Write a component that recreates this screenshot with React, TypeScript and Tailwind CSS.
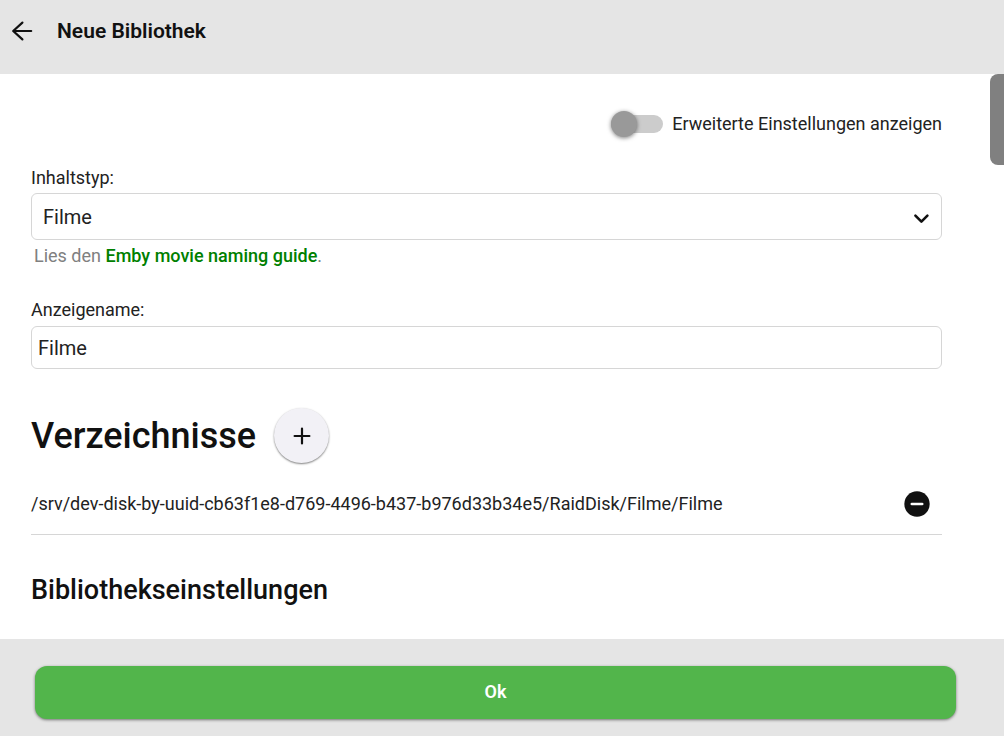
import { useState } from "react";

export default function App() {
  const [advanced, setAdvanced] = useState(false);
  const [name, setName] = useState("Filme");

  return (
    <div className="flex min-h-screen flex-col bg-white font-[Roboto,sans-serif] text-lg leading-6 font-normal text-[#222222]">
      <header className="flex items-center gap-[23px] bg-[#e5e5e5] px-2.5 pt-[19px] pb-[31px] text-[#111111]">
        <button type="button" aria-label="Zurück" className="flex">
          <svg
            viewBox="0 0 24 24"
            className="size-6"
            fill="none"
            stroke="currentColor"
            strokeWidth="2.2"
            strokeLinecap="round"
            strokeLinejoin="round"
          >
            <path d="M21.2 12H3.4M12.4 3.6L3.2 12l9.2 8.4" />
          </svg>
        </button>
        <h1 className="text-[21px] leading-6 font-semibold">Neue Bibliothek</h1>
      </header>

      <div className="flex flex-1 items-start">
        <main className="min-w-0 flex-1 pt-9 pr-12 pb-8 pl-[31px]">
          <label className="flex h-7 items-center justify-end gap-[9px]">
            <input
              type="checkbox"
              checked={advanced}
              onChange={(e) => setAdvanced(e.target.checked)}
              className="flex h-4.5 w-13 appearance-none items-center rounded-full bg-[#cccccc] before:size-6.5 before:shrink-0 before:rounded-full before:bg-[#999999] before:shadow-[0_1px_4px_rgba(0,0,0,0.5)] checked:justify-end checked:before:bg-[#52b54b]"
            />
            Erweiterte Einstellungen anzeigen
          </label>

          <div className="mt-7 flex flex-col gap-[3px]">
            <label htmlFor="content-type">Inhaltstyp:</label>
            <div className="grid items-center">
              <select
                id="content-type"
                defaultValue="Filme"
                className="col-start-1 row-start-1 h-[47px] w-full appearance-none rounded-md border border-[#d6d6d6] bg-white px-[11px] text-xl font-normal"
              >
                <option>Filme</option>
              </select>
              <svg
                viewBox="0 0 24 24"
                className="pointer-events-none col-start-1 row-start-1 mr-2 size-6 justify-self-end text-[#111111]"
                fill="none"
                stroke="currentColor"
                strokeWidth="2.6"
                strokeLinecap="round"
                strokeLinejoin="round"
              >
                <path d="M5.4 10.6l6 6 6-6" />
              </svg>
            </div>
            <p className="px-[3px] pt-px text-[#808080]">
              Lies den{" "}
              <a href="#naming" className="font-medium text-[#008000]">
                Emby movie naming guide
              </a>
              .
            </p>
          </div>

          <div className="mt-[30px] flex flex-col gap-1">
            <label htmlFor="display-name">Anzeigename:</label>
            <input
              id="display-name"
              type="text"
              value={name}
              onChange={(e) => setName(e.target.value)}
              className="h-[43px] w-full rounded-md border border-[#d6d6d6] bg-white px-1.5 text-xl font-normal"
            />
          </div>

          <div className="mt-[39px] flex items-center gap-[18px] text-[#111111]">
            <h2 className="text-4xl font-medium">Verzeichnisse</h2>
            <button
              type="button"
              aria-label="Verzeichnis hinzufügen"
              className="flex size-[55px] items-center justify-center rounded-full bg-[#f2f1f6] shadow-[0_1px_2px_rgba(0,0,0,0.5)]"
            >
              <svg
                viewBox="0 0 24 24"
                className="size-6"
                fill="none"
                stroke="currentColor"
                strokeWidth="2.2"
                strokeLinecap="round"
              >
                <path d="M12 4.6v14.8M4.6 12h14.8" />
              </svg>
            </button>
          </div>

          <div className="mt-[11px] flex h-[61px] items-center justify-between gap-4 border-b border-[#d6d6d6] pr-3">
            <span className="min-w-0 break-words">
              /srv/dev-disk-by-uuid-cb63f1e8-d769-4496-b437-b976d33b34e5/RaidDisk/Filme/Filme
            </span>
            <button type="button" aria-label="Verzeichnis entfernen" className="flex shrink-0">
              <svg viewBox="0 0 26 26" className="size-6.5">
                <circle cx="13" cy="13" r="12.7" fill="#111111" />
                <path d="M7.8 13h10.4" stroke="#ffffff" strokeWidth="2.6" strokeLinecap="round" />
              </svg>
            </button>
          </div>

          <h3 className="mt-[39px] text-[27px] leading-8 font-medium text-[#111111]">
            Bibliothekseinstellungen
          </h3>
        </main>
        <div className="h-[91px] w-3.5 shrink-0 rounded-l-lg bg-[#808080]" />
      </div>

      <footer className="bg-[#e5e5e5] pt-[27px] pr-12 pb-[17px] pl-[35px]">
        <button
          type="button"
          className="h-[53px] w-full rounded-xl bg-[#52b54b] pb-0.5 text-lg font-semibold text-white shadow-[0_1px_3px_rgba(0,0,0,0.5)]"
        >
          Ok
        </button>
      </footer>
    </div>
  );
}
